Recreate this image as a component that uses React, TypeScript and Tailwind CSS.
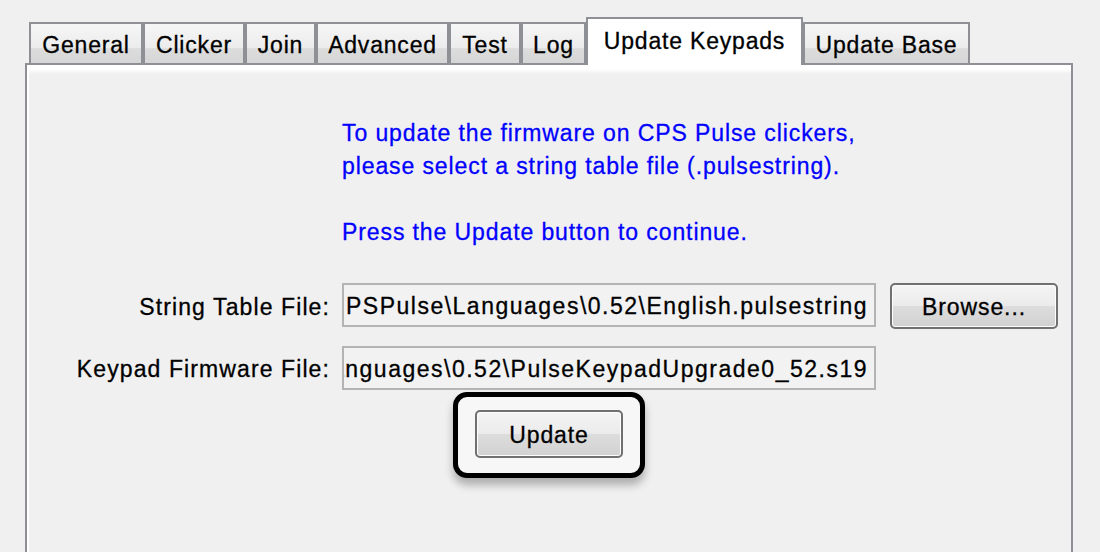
import React from "react";

const tabs = [
  { label: "General", w: "w-[114px]" },
  { label: "Clicker", w: "w-[102px]" },
  { label: "Join", w: "w-[71px]" },
  { label: "Advanced", w: "w-[133px]" },
  { label: "Test", w: "w-[72px]" },
  { label: "Log", w: "w-[65px]" },
  { label: "Update Keypads", w: "w-[217px]", active: true },
  { label: "Update Base", w: "w-[167px]" },
];

function Tab({ label, w, active }: { label: string; w: string; active?: boolean }) {
  if (active) {
    return (
      <div
        className={`${w} relative z-10 h-[48px] -mb-[2px] flex items-start justify-center pt-[11px] bg-white border-2 border-b-0 border-[#8e9096] text-black tracking-[0.8px]`}
      >
        {label}
      </div>
    );
  }
  return (
    <div
      className={`${w} h-[41px] flex items-start justify-center pt-[10px] border-2 border-b-0 border-[#8e9096] text-black tracking-[0.8px] bg-[linear-gradient(to_bottom,#f6f6f6_0%,#ececec_62%,#dcdcdc_63%,#d6d6d6_100%)]`}
    >
      {label}
    </div>
  );
}

function PathField({ path }: { path: string }) {
  return (
    <div className="h-[44px] flex items-center justify-end overflow-hidden whitespace-nowrap border-2 border-[#b4b4b4] bg-[#f2f2f2] pr-[6px] pt-[3px] text-black tracking-[1.5px]">
      <span className="shrink-0">{path}</span>
    </div>
  );
}

export default function App() {
  return (
    <div className="w-full h-[552px] overflow-hidden bg-[#f0f0f0] font-['Liberation_Sans',Arial,sans-serif] text-[23px] tracking-[0.9px] leading-none [-webkit-text-stroke:0.3px]">
      <div className="pl-[25px] pr-[27px] pt-[17px]">
        <div className="flex items-end pl-[4px]">
          {tabs.map((t) => (
            <Tab key={t.label} label={t.label} w={t.w} active={t.active} />
          ))}
        </div>

        <div className="h-[520px] border-2 border-[#8e9096]">
          <div className="h-full border-l-2 border-white bg-[linear-gradient(to_bottom,#ffffff_0px,#ffffff_4px,#f0f0f0_9px)] pt-[52px]">
            <div className="grid grid-cols-[301px_534px_167px] gap-x-[12px]">
              <div />
              <div className="col-span-2 text-[#0000ff] leading-[33px] whitespace-nowrap">
                <p>To update the firmware on CPS Pulse clickers,</p>
                <p>please select a string table file (.pulsestring).</p>
                <p>&nbsp;</p>
                <p>Press the Update button to continue.</p>
              </div>

              <div className="mt-[34px] pt-[3px] flex items-center justify-end text-black whitespace-nowrap tracking-[1.1px]">String Table File:</div>
              <div className="mt-[34px]">
                <PathField path="PSPulse\Languages\0.52\English.pulsestring" />
              </div>
              <div className="mt-[34px] ml-[2px]">
                <button className="w-[168px] h-[46px] pt-[2px] rounded-[5px] border-2 border-[#707070] text-black bg-[linear-gradient(to_bottom,#f4f4f4_0%,#ebebeb_50%,#dddddd_51%,#d1d1d1_100%)] shadow-[inset_0_0_0_1px_#fcfcfc]">
                  Browse...
                </button>
              </div>

              <div className="mt-[17px] pt-[3px] flex items-center justify-end text-black whitespace-nowrap tracking-[1.1px]">Keypad Firmware File:</div>
              <div className="mt-[17px]">
                <PathField path="Languages\0.52\PulseKeypadUpgrade0_52.s19" />
              </div>
              <div />
            </div>

            <div className="flex justify-center mt-[2px] pr-[2px]">
              <div className="pt-[13px] pb-[15px] px-[17px] border-[5px] border-black rounded-[14px] bg-[#f7f7f7] shadow-[0_7px_8px_rgba(0,0,0,0.28)]">
                <button className="w-[148px] h-[48px] pt-[2px] rounded-[5px] border-2 border-[#707070] text-black bg-[linear-gradient(to_bottom,#f4f4f4_0%,#ebebeb_50%,#dddddd_51%,#d1d1d1_100%)] shadow-[inset_0_0_0_1px_#fcfcfc]">
                  Update
                </button>
              </div>
            </div>
          </div>
        </div>
      </div>
    </div>
  );
}
